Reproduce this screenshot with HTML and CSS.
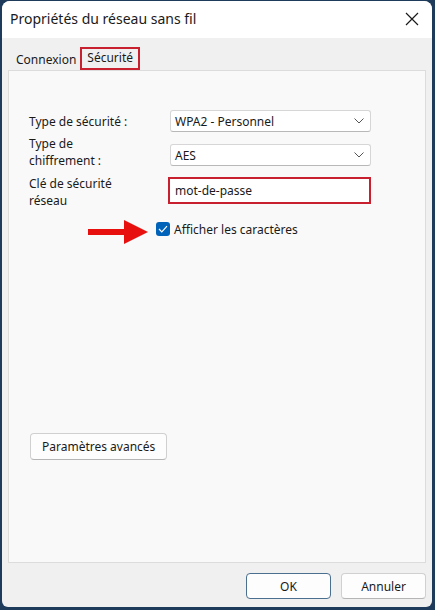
FILE: index.html
```html
<!DOCTYPE html>
<html lang="fr">
<head>
    <meta charset="UTF-8">
    <meta name="viewport" content="width=device-width, initial-scale=1.0">
    <title>Propriétés du réseau sans fil</title>
    <link rel="stylesheet" href="styles.css">
</head>
<body>
    <div class="window">
        <div class="titlebar">
            <span class="title">Propriétés du réseau sans fil</span>
            <svg class="close" width="14" height="14" viewBox="0 0 14 14">
                <path d="M1 1 L13 13 M13 1 L1 13" stroke="#1a1a1a" stroke-width="1.2" fill="none"/>
            </svg>
        </div>

        <div class="tabs">
            <span class="tab">Connexion</span>
            <span class="tab active">Sécurité</span>
        </div>

        <div class="panel">
            <div class="form">
                <label class="label">Type de sécurité :</label>
                <div class="combo">
                    <span>WPA2 - Personnel</span>
                    <svg width="10" height="6" viewBox="0 0 10 6"><path d="M0.5 0.5 L5 5 L9.5 0.5" stroke="#555" stroke-width="1" fill="none"/></svg>
                </div>

                <label class="label raised">Type de<br>chiffrement :</label>
                <div class="combo">
                    <span>AES</span>
                    <svg width="10" height="6" viewBox="0 0 10 6"><path d="M0.5 0.5 L5 5 L9.5 0.5" stroke="#555" stroke-width="1" fill="none"/></svg>
                </div>

                <label class="label">Clé de sécurité<br>réseau</label>
                <div class="textbox">mot-de-passe</div>
            </div>

            <div class="check-row">
                <!-- flèche rouge d'annotation -->
                <svg class="arrow" width="60" height="24" viewBox="0 0 60 24">
                    <rect x="0" y="9" width="38" height="6" fill="#e8100f"/>
                    <polygon points="36,0 60,12 36,24" fill="#e8100f"/>
                </svg>
                <span class="checkbox">
                    <svg width="10" height="8" viewBox="0 0 10 8"><path d="M1 4 L3.8 6.8 L9 1.2" stroke="#fff" stroke-width="1.2" fill="none"/></svg>
                </span>
                <span class="check-label">Afficher les caractères</span>
            </div>

            <button class="btn advanced">Paramètres avancés</button>
        </div>

        <div class="footer">
            <button class="btn default">OK</button>
            <button class="btn">Annuler</button>
        </div>
    </div>
</body>
</html>
```

FILE: styles.css
```css
* {
    box-sizing: border-box;
}

body {
    margin: 0;
    padding: 1px 3px 3px 2px;
    background-color: #1f3b5c;
    font-family: "Noto Sans", "Open Sans", Arial, sans-serif;
    font-size: 12px;
    color: #1a1a1a;
}

.window {
    height: 606px;
    background-color: #f0f0f0;
    border-radius: 8px 8px 6px 6px;
    overflow: hidden;
    display: flex;
    flex-direction: column;
}

.titlebar {
    height: 37px;
    background-color: #ffffff;
    display: flex;
    align-items: center;
    justify-content: space-between;
    padding: 0 13px 0 8px;
    flex-shrink: 0;
}

.title {
    font-size: 14px;
    margin-top: -2px;
}

.close {
    margin-top: -1px;
}

.tabs {
    height: 32px;
    display: flex;
    align-items: flex-end;
    padding-left: 7px;
    flex-shrink: 0;
}

.tab {
    height: 20px;
    line-height: 20px;
    padding: 0 3px 0 7px;
}

.tab.active {
    height: 23px;
    line-height: 17px;
    padding: 0 5px;
    border: 2px solid #c8202e;
    margin-left: 1px;
}

.panel {
    height: 493px;
    flex-shrink: 0;
    margin: 0 6px;
    background-color: #f9f9f9;
    border: 1px solid #dcdcdc;
    padding-top: 39px;
    display: flex;
    flex-direction: column;
}

.form {
    display: grid;
    grid-template-columns: 141px 201px;
    grid-template-rows: 22px 22px 27px;
    row-gap: 12px;
    padding-left: 20px;
    align-items: center;
}

.label {
    line-height: 17px;
}

.label.raised {
    margin-top: -7px;
}

.combo {
    height: 22px;
    background-color: #ffffff;
    border: 1px solid #d6d6d6;
    border-bottom-color: #b8b8b8;
    border-radius: 3px;
    display: flex;
    align-items: center;
    justify-content: space-between;
    padding: 0 6px 0 4px;
}

.textbox {
    height: 27px;
    line-height: 23px;
    background-color: #ffffff;
    border: 2px solid #c8202e;
    padding-left: 5px;
    margin-left: -2px;
    margin-top: -2px;
}

.check-row {
    display: flex;
    align-items: center;
    padding-left: 79px;
    margin-top: 12px;
    height: 24px;
}

.arrow {
    margin-right: 8px;
    margin-top: 5px;
}

.checkbox {
    width: 14px;
    height: 14px;
    border-radius: 3px;
    background-color: #0062b8;
    display: flex;
    align-items: center;
    justify-content: center;
    margin-right: 4px;
}

.btn {
    font-family: "Noto Sans", "Open Sans", Arial, sans-serif;
    font-size: 12px;
    color: #1a1a1a;
    background-color: #fdfdfd;
    border: 1px solid #d0d0d0;
    border-bottom-color: #b5b5b5;
    border-radius: 4px;
    height: 27px;
    padding: 0 11px;
}

.advanced {
    align-self: flex-start;
    margin: 192px 0 0 21px;
}

.footer {
    display: flex;
    justify-content: flex-end;
    gap: 10px;
    padding: 10px 6px 0 0;
}

.footer .btn {
    width: 85px;
    height: 26px;
}

.footer .btn.default {
    border-color: #4b6f8e;
}
```
